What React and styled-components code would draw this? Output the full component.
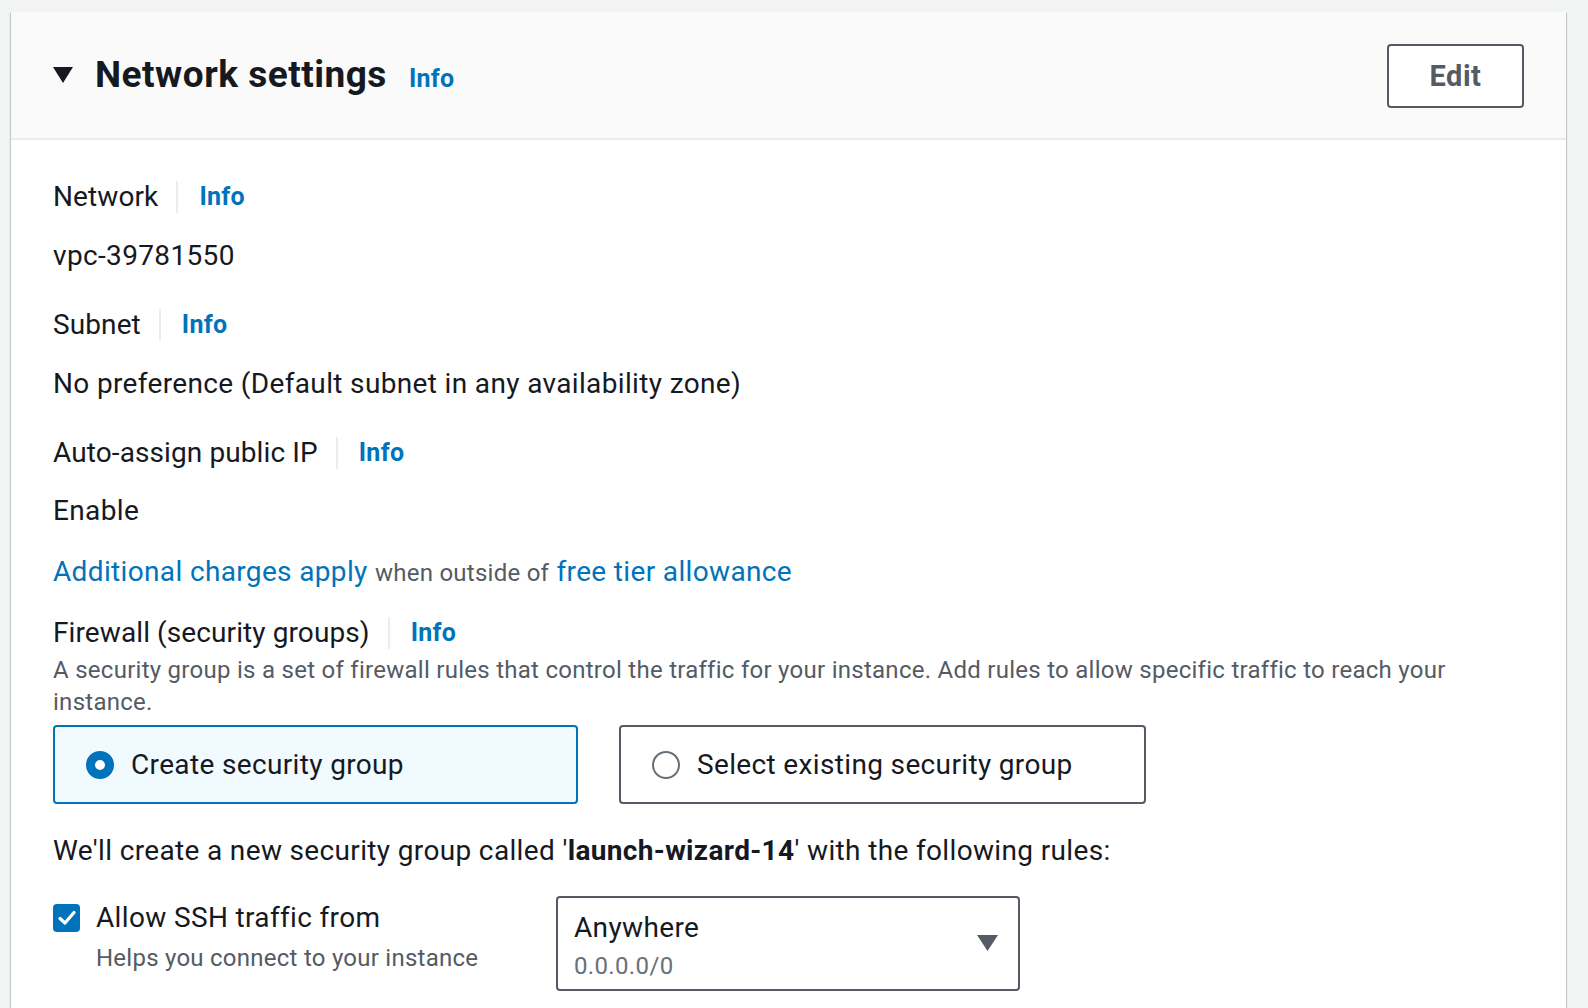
import styled, { createGlobalStyle } from "styled-components";

const GlobalStyle = createGlobalStyle`
  body {
    margin: 0;
    background: #f2f3f3;
    font-family: Roboto, "Liberation Sans", Arial, sans-serif;
    color: #16191f;
  }
`;

const Page = styled.div`
  min-height: 100vh;
  box-sizing: border-box;
  padding: 12px 22px 0 11px;
  display: flex;
`;

const Card = styled.section`
  flex: 1;
  background: #ffffff;
  box-shadow: 0 1px 1px 0 rgba(0, 28, 36, 0.3), 1px 1px 1px 0 rgba(0, 28, 36, 0.15),
    -1px 1px 1px 0 rgba(0, 28, 36, 0.15);
`;

const Header = styled.header`
  min-height: 128px;
  box-sizing: border-box;
  background: #fafafa;
  border-bottom: 2px solid #eaeded;
  display: flex;
  align-items: center;
  padding: 0 42px;
`;

const Caret = styled.svg`
  width: 20px;
  height: 16px;
  margin-right: 22px;
  flex-shrink: 0;
`;

const Title = styled.h2`
  margin: 0 0 2px;
  font-size: 37px;
  font-weight: 700;
  letter-spacing: 0.5px;
  display: flex;
  align-items: baseline;
  gap: 22px;
  flex: 1;
`;

const InfoLink = styled.a`
  color: #0073bb;
  font-weight: 700;
  font-size: 25px;
  letter-spacing: 0.3px;
  text-decoration: none;
  cursor: pointer;
`;

const EditButton = styled.button`
  width: 137px;
  height: 64px;
  margin-top: 2px;
  background: #ffffff;
  border: 2px solid #545b64;
  border-radius: 4px;
  color: #545b64;
  font-family: inherit;
  font-size: 29px;
  font-weight: 700;
  letter-spacing: 0.5px;
  cursor: pointer;
`;

const Body = styled.div`
  padding: 37px 42px 0;
  display: flex;
  flex-direction: column;
  letter-spacing: 0.35px;
`;

const Line = styled.div`
  font-size: 28px;
  line-height: 40px;
  margin-top: ${(p) => p.$top || 0}px;
  white-space: nowrap;
`;

const LabelRow = styled.div`
  display: flex;
  align-items: center;
  font-size: 28px;
  line-height: 40px;
  letter-spacing: 0.1px;
  margin-top: ${(p) => p.$top || 0}px;
`;

const Divider = styled.span`
  width: 2px;
  height: 32px;
  background: #eaeded;
  margin: 0 21px 0 18px;
`;

const TextLink = styled.a`
  color: #0073bb;
  text-decoration: none;
`;

const Muted = styled.span`
  color: #545b64;
  font-size: 24px;
  letter-spacing: 0.25px;
`;

const Description = styled.p`
  margin: 2px 0 0;
  font-size: 24px;
  line-height: 31.5px;
  letter-spacing: 0.27px;
  color: #545b64;
  max-width: 1400px;
`;

const Tiles = styled.div`
  display: grid;
  grid-template-columns: 525px 527px;
  gap: 41px;
  margin-top: 7px;
`;

const Tile = styled.label`
  height: 79px;
  box-sizing: border-box;
  border: 2px solid ${(p) => (p.$selected ? "#0073bb" : "#545b64")};
  background: ${(p) => (p.$selected ? "#f1faff" : "#ffffff")};
  border-radius: 4px;
  display: flex;
  align-items: center;
  gap: 17px;
  padding-left: 31px;
  font-size: 28px;
  cursor: pointer;
`;

const RadioDot = styled.span`
  width: 28px;
  height: 28px;
  box-sizing: border-box;
  border-radius: 50%;
  flex-shrink: 0;
  border: ${(p) => (p.$checked ? "9px solid #0073bb" : "2px solid #687078")};
  background: #ffffff;
`;

const Strong = styled.strong`
  font-weight: 700;
`;

const RuleRow = styled.div`
  display: flex;
  margin-top: 25px;
`;

const RuleCheck = styled.div`
  width: 503px;
  display: grid;
  grid-template-columns: 27px 1fr;
  grid-template-rows: auto auto;
  column-gap: 16px;
  align-content: start;
  padding-top: 2px;
`;

const CheckBox = styled.span`
  width: 27px;
  height: 28px;
  margin-top: 6px;
  border-radius: 4px;
  background: #0073bb;
  display: flex;
  align-items: center;
  justify-content: center;
`;

const RuleLabel = styled.div`
  font-size: 28px;
  line-height: 40px;
`;

const Helper = styled.div`
  grid-column: 2;
  margin-top: 6px;
  font-size: 24px;
  line-height: 28px;
  letter-spacing: 0.25px;
  color: #545b64;
`;

const Select = styled.div`
  width: 464px;
  height: 95px;
  box-sizing: border-box;
  border: 2px solid #545b64;
  border-radius: 4px;
  padding: 10px 20px 0 16px;
  display: flex;
  justify-content: space-between;
  align-items: flex-start;
`;

const SelectText = styled.div`
  display: flex;
  flex-direction: column;
`;

const SelectValue = styled.span`
  font-size: 28px;
  line-height: 40px;
`;

const SelectSub = styled.span`
  margin-top: 2px;
  font-size: 24px;
  line-height: 32px;
  color: #687078;
`;

const SelectArrow = styled.svg`
  width: 21px;
  height: 16px;
  margin-top: 27px;
`;

function Field({ label, value, top }) {
  return (
    <>
      <LabelRow $top={top}>
        {label}
        <Divider />
        <InfoLink>Info</InfoLink>
      </LabelRow>
      <Line $top={19}>{value}</Line>
    </>
  );
}

export default function App() {
  return (
    <>
      <GlobalStyle />
      <Page>
        <Card>
          <Header>
            <Caret viewBox="0 0 20 16">
              <path d="M0 0 H20 L10 16 Z" fill="#16191f" />
            </Caret>
            <Title>
              Network settings
              <InfoLink>Info</InfoLink>
            </Title>
            <EditButton>Edit</EditButton>
          </Header>
          <Body>
            <Field label="Network" value="vpc-39781550" top={0} />
            <Field
              label="Subnet"
              value="No preference (Default subnet in any availability zone)"
              top={29}
            />
            <LabelRow $top={29}>
              Auto-assign public IP
              <Divider />
              <InfoLink>Info</InfoLink>
            </LabelRow>
            <Line $top={18}>Enable</Line>
            <Line $top={21}>
              <TextLink>Additional charges apply</TextLink> <Muted>when outside of</Muted>{" "}
              <TextLink>free tier allowance</TextLink>
            </Line>
            <LabelRow $top={20}>
              Firewall (security groups)
              <Divider />
              <InfoLink>Info</InfoLink>
            </LabelRow>
            <Description>
              A security group is a set of firewall rules that control the traffic for your instance. Add rules to
              allow specific traffic to reach your instance.
            </Description>
            <Tiles>
              <Tile $selected>
                <RadioDot $checked />
                Create security group
              </Tile>
              <Tile>
                <RadioDot />
                Select existing security group
              </Tile>
            </Tiles>
            <Line $top={27}>
              We'll create a new security group called '<Strong>launch-wizard-14</Strong>' with the following rules:
            </Line>
            <RuleRow>
              <RuleCheck>
                <CheckBox>
                  <svg width="18" height="16" viewBox="0 0 18 16">
                    <path d="M2 8.5 L7 13 L16 2.5" fill="none" stroke="#ffffff" strokeWidth="3.2" strokeLinecap="round" strokeLinejoin="round" />
                  </svg>
                </CheckBox>
                <RuleLabel>Allow SSH traffic from</RuleLabel>
                <Helper>Helps you connect to your instance</Helper>
              </RuleCheck>
              <Select>
                <SelectText>
                  <SelectValue>Anywhere</SelectValue>
                  <SelectSub>0.0.0.0/0</SelectSub>
                </SelectText>
                <SelectArrow viewBox="0 0 21 16">
                  <path d="M0 0 H21 L10.5 16 Z" fill="#545b64" />
                </SelectArrow>
              </Select>
            </RuleRow>
          </Body>
        </Card>
      </Page>
    </>
  );
}
